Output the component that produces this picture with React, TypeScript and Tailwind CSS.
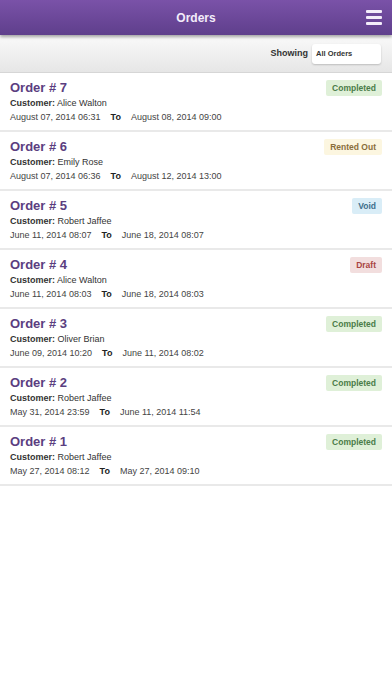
import React from 'react';

interface Order {
  id: number;
  customer: string;
  from: string;
  to: string;
  status: 'Completed' | 'Rented Out' | 'Void' | 'Draft';
}

const orders: Order[] = [
  { id: 7, customer: 'Alice Walton', from: 'August 07, 2014 06:31', to: 'August 08, 2014 09:00', status: 'Completed' },
  { id: 6, customer: 'Emily Rose', from: 'August 07, 2014 06:36', to: 'August 12, 2014 13:00', status: 'Rented Out' },
  { id: 5, customer: 'Robert Jaffee', from: 'June 11, 2014 08:07', to: 'June 18, 2014 08:07', status: 'Void' },
  { id: 4, customer: 'Alice Walton', from: 'June 11, 2014 08:03', to: 'June 18, 2014 08:03', status: 'Draft' },
  { id: 3, customer: 'Oliver Brian', from: 'June 09, 2014 10:20', to: 'June 11, 2014 08:02', status: 'Completed' },
  { id: 2, customer: 'Robert Jaffee', from: 'May 31, 2014 23:59', to: 'June 11, 2014 11:54', status: 'Completed' },
  { id: 1, customer: 'Robert Jaffee', from: 'May 27, 2014 08:12', to: 'May 27, 2014 09:10', status: 'Completed' },
];

const badgeStyles: Record<Order['status'], string> = {
  Completed: 'bg-[#dff0d8] text-[#4a7c48]',
  'Rented Out': 'bg-[#fcf6e0] text-[#8a6d3b]',
  Void: 'bg-[#d9edf7] text-[#3d6f8c]',
  Draft: 'bg-[#f2dede] text-[#a94442]',
};

const OrderRow: React.FC<{ order: Order }> = ({ order }) => (
  <div className="h-[59px] border-b-2 border-[#e9e9e9] pl-[10px] pr-[10px] pt-[6px] flex justify-between">
    <div className="flex flex-col">
      <div className="text-[13px] leading-[17px] font-bold text-[#5b3e80]">Order # {order.id}</div>
      <div className="text-[9px] leading-[12px] mt-[1px] text-[#333]">
        <span className="font-bold">Customer:</span> {order.customer}
      </div>
      <div className="text-[9px] leading-[12px] mt-[2px] text-[#444]">
        {order.from}
        <span className="font-bold text-[#222] mx-[10px]">To</span>
        {order.to}
      </div>
    </div>
    <div className="pt-[1px]">
      <div className={`rounded-[2px] px-[6px] text-[8.5px] leading-[16px] font-bold ${badgeStyles[order.status]}`}>
        {order.status}
      </div>
    </div>
  </div>
);

export default function App() {
  return (
    <div className="w-[392px] h-[696px] bg-white overflow-hidden font-['Liberation_Sans',Arial,sans-serif]">
      <div className="relative z-10 h-[35px] bg-gradient-to-b from-[#7a52a8] to-[#5f3f8c] shadow-[0_2px_3px_rgba(0,0,0,0.35)] flex items-center justify-center">
        <span className="text-[12px] font-bold text-[#f3ecfa]">Orders</span>
        <div className="absolute right-[10px] top-[10px] flex flex-col gap-[3px]">
          <div className="w-[16px] h-[3px] bg-[#f3ecfa] rounded-[1px]" />
          <div className="w-[16px] h-[3px] bg-[#f3ecfa] rounded-[1px]" />
          <div className="w-[16px] h-[3px] bg-[#f3ecfa] rounded-[1px]" />
        </div>
      </div>
      <div className="h-[38px] bg-gradient-to-b from-[#fafafa] to-[#e6e6e6] border-b border-[#d6d6d6] flex items-center justify-end pr-[11px] gap-[4px]">
        <span className="text-[9px] font-bold text-[#333]">Showing</span>
        <div className="w-[69px] h-[20px] bg-white rounded-[3px] shadow-[0_1px_2px_rgba(0,0,0,0.2)] flex items-center pl-[4px]">
          <span className="text-[7.5px] font-bold text-[#333]">All Orders</span>
        </div>
      </div>
      {orders.map((o) => (
        <OrderRow key={o.id} order={o} />
      ))}
    </div>
  );
}
